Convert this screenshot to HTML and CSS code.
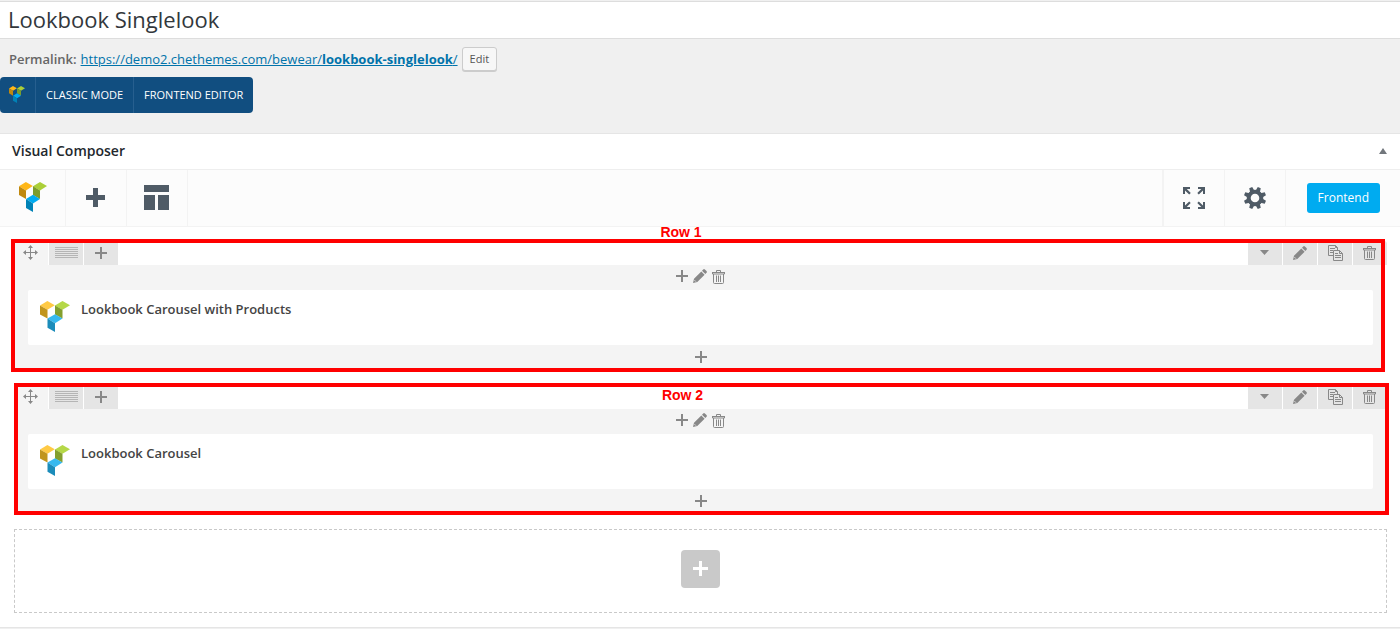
FILE: index.html
```
<!DOCTYPE html>
<html lang="en">
<head>
<meta charset="utf-8">
<title>Lookbook Singlelook</title>
<link rel="stylesheet" href="styles.css">
</head>
<body>
<svg class="sprite" aria-hidden="true">
  <symbol id="logo" viewBox="0 0 28 30" preserveAspectRatio="none">
    <path class="logo-y1" d="M0 4.3 6.9 0 13.8 4 7 8.5z"/>
    <path class="logo-y2" d="M0 4.3 7 8.5V17L0 13z"/>
    <path class="logo-g1" d="M14 4.3 21 0l7 4-7 4.500-7-4z"/>
    <path class="logo-g2" d="M14 4.3 21 8.5V17l-7-4z"/>
    <path class="logo-b1" d="M7 17l7-4.2L21 17l-7 4.5z"/>
    <path class="logo-b2" d="M7 17l7 4.5V30l-7-4z"/>
  </symbol>
  <symbol id="plus" viewBox="0 0 12 12"><path d="M5 0h2v5h5v2H7v5H5V7H0V5h5z"/></symbol>
  <symbol id="pencil" viewBox="0 0 14 14"><path d="M0 14l1-4.3L8.3 2.4l3.3 3.3L4.3 13zM9 1.7l1.2-1.2q.8-.8 1.7 0l1.6 1.6q.8.9 0 1.7L12.300 5z"/><path class="cut" d="M1.5 11.2l1.4 1.4"/></symbol>
  <symbol id="trash" viewBox="0 0 13 15"><path class="line" d="M0 3.5h13M4.5 3V1.500h4V3M.5 3.5V5h12V3.5M1.5 5v8.500q0 1 1 1h8q1 0 1-1V5M4.5 6.500V13M6.5 6.500V13M8.5 6.500V13"/></symbol>
  <symbol id="copy" viewBox="0 0 15 16"><path class="line" d="M5.5 10.500h-5v-10h7l2 2V5M2 3.500h5M2 5.500h3M2 7.500h3M7.5 .5v2h2M5.5 5.500h6l3 3v7h-9zM11.5 5.500v3h3M7 8.500h3M7 10.500h6M7 12.500h6"/></symbol>
  <symbol id="move" viewBox="0 0 15 15"><path d="M7 2h1v11H7zM2 7h11v1H2zM7.5 0L10 3H5zM7.5 15L5 12h5zM0 7.500L3 5v5zM15 7.500L12 10V5z"/></symbol>
  <symbol id="lines" viewBox="0 0 23 11"><path d="M0 0h23v1H0zM0 2h23v1H0zM0 4h23v1H0zM0 6h23v1H0zM0 8h23v1H0zM0 10h23v1H0z"/></symbol>
  <symbol id="caret" viewBox="0 0 9 5"><path d="M0 0h9L4.5 5z"/></symbol>
</svg>

<header class="title-bar">
  <input class="title-input" type="text" value="Lookbook Singlelook" aria-label="Title">
</header>

<div class="permalink">
  <strong>Permalink:</strong>
  <a href="#">https://demo2.chethemes.com/bewear/<b>lookbook-singlelook</b>/</a>
  <button class="edit" type="button">Edit</button>
</div>

<div class="modes">
  <span class="mode-logo"><svg width="16" height="17"><use href="#logo"/></svg></span>
  <button type="button">CLASSIC MODE</button>
  <button type="button">FRONTEND EDITOR</button>
</div>

<main class="composer">
  <div class="composer-head">
    <h2>Visual Composer</h2>
    <button class="toggle" type="button" aria-label="Toggle panel"><svg width="8" height="6" viewBox="0 0 8 6"><path d="M4 0l4 6H0z"/></svg></button>
  </div>

  <nav class="toolbar">
    <a class="tool tool-logo" href="#" aria-label="Visual Composer"><svg width="28" height="30"><use href="#logo"/></svg></a>
    <button class="tool odd-w odd-h" type="button" aria-label="Add element"><svg width="19" height="19" viewBox="0 0 19 19"><path d="M7 0h5v7h7v5h-7v7H7v-7H0V7h7z"/></svg></button>
    <button class="tool odd-w odd-h" type="button" aria-label="Templates"><svg width="25" height="25" viewBox="0 0 25 25"><path d="M0 0h25v7H0zM0 10h11v15H0zM14 10h11v15H14z"/></svg></button>
    <span class="spacer"></span>
    <button class="tool tool-right" type="button" aria-label="Full screen"><svg width="22" height="22" viewBox="0 0 22 22"><path d="M0 0h7v2H3.8l4 4L6.2 7.500 2 3.500V7H0zM22 0v7h-2V3.500l-4.200 4L14.300 6l4-4H15V0zM0 22v-7h2v3.500l4.200-4L7.700 16l-4 4H7v2zM22 22h-7v-2h3.300l-4-4 1.500-1.500 4.200 4V15h2z"/></svg></button>
    <button class="tool" type="button" aria-label="Settings"><svg width="22" height="22" viewBox="-11 -11 22 22"><g transform="rotate(22.5)"><path id="tooth" d="M-2.3-7l.7-4.200h3.200l.7 4.200zM-2.3 7l.7 4.200h3.200l.7-4.200z"/><use href="#tooth" transform="rotate(45)"/><use href="#tooth" transform="rotate(90)"/><use href="#tooth" transform="rotate(135)"/></g><circle class="ring" r="6.3"/></svg></button>
    <div class="frontend-wrap"><button class="frontend" type="button">Frontend</button></div>
  </nav>

  <div class="rows">
    <section class="row">
      <div class="controls">
        <button class="ctl drag odd-w odd-h" type="button" aria-label="Move row"><svg width="15" height="15"><use href="#move"/></svg></button>
        <button class="ctl layout odd-h" type="button" aria-label="Row layout"><svg width="23" height="11"><use href="#lines"/></svg></button>
        <button class="ctl" type="button" aria-label="Add column"><svg width="12" height="12"><use href="#plus"/></svg></button>
        <span class="spacer"></span>
        <button class="ctl odd-w odd-h" type="button" aria-label="Toggle row"><svg width="9" height="5"><use href="#caret"/></svg></button>
        <button class="ctl" type="button" aria-label="Edit row"><svg width="14" height="14"><use href="#pencil"/></svg></button>
        <button class="ctl" type="button" aria-label="Clone row"><svg width="15" height="16"><use href="#copy"/></svg></button>
        <button class="ctl odd-w odd-h" type="button" aria-label="Delete row"><svg width="13" height="15"><use href="#trash"/></svg></button>
      </div>
      <div class="column">
        <div class="column-tools">
          <button type="button" aria-label="Add"><svg width="12" height="12"><use href="#plus"/></svg></button>
          <button type="button" aria-label="Edit column"><svg width="14" height="14"><use href="#pencil"/></svg></button>
          <button type="button" aria-label="Delete column"><svg width="13" height="15"><use href="#trash"/></svg></button>
        </div>
        <article class="element"><svg class="soft" width="30" height="31"><use href="#logo"/></svg><h3>Lookbook Carousel with Products</h3></article>
        <div class="column-foot"><button type="button" aria-label="Append"><svg width="12" height="12"><use href="#plus"/></svg></button></div>
      </div>
      <div class="mark mark-one"><span>Row 1</span></div>
    </section>

    <section class="row">
      <div class="controls">
        <button class="ctl drag odd-w odd-h" type="button" aria-label="Move row"><svg width="15" height="15"><use href="#move"/></svg></button>
        <button class="ctl layout odd-h" type="button" aria-label="Row layout"><svg width="23" height="11"><use href="#lines"/></svg></button>
        <button class="ctl" type="button" aria-label="Add column"><svg width="12" height="12"><use href="#plus"/></svg></button>
        <span class="spacer"></span>
        <button class="ctl odd-w odd-h" type="button" aria-label="Toggle row"><svg width="9" height="5"><use href="#caret"/></svg></button>
        <button class="ctl" type="button" aria-label="Edit row"><svg width="14" height="14"><use href="#pencil"/></svg></button>
        <button class="ctl" type="button" aria-label="Clone row"><svg width="15" height="16"><use href="#copy"/></svg></button>
        <button class="ctl odd-w odd-h" type="button" aria-label="Delete row"><svg width="13" height="15"><use href="#trash"/></svg></button>
      </div>
      <div class="column">
        <div class="column-tools">
          <button type="button" aria-label="Add"><svg width="12" height="12"><use href="#plus"/></svg></button>
          <button type="button" aria-label="Edit column"><svg width="14" height="14"><use href="#pencil"/></svg></button>
          <button type="button" aria-label="Delete column"><svg width="13" height="15"><use href="#trash"/></svg></button>
        </div>
        <article class="element"><svg class="soft" width="30" height="31"><use href="#logo"/></svg><h3>Lookbook Carousel</h3></article>
        <div class="column-foot"><button type="button" aria-label="Append"><svg width="12" height="12"><use href="#plus"/></svg></button></div>
      </div>
      <div class="mark mark-two"><span>Row 2</span></div>
    </section>

    <div class="dropzone">
      <button type="button" aria-label="Add row"><svg width="15" height="15" viewBox="0 0 15 15"><path d="M6 0h3v6h6v3H9v6H6V9H0V6h6z"/></svg></button>
    </div>
  </div>
</main>
</body>
</html>
```
FILE: styles.css
```
* {
  box-sizing: border-box;
}

body {
  margin: 0;
  background: #f0f0f0;
  color: #444;
  font: 13px/18px "Open Sans", sans-serif;
}

button {
  display: inline-flex;
  align-items: center;
  justify-content: center;
  margin: 0;
  padding: 0;
  border: 0;
  background: none;
  color: inherit;
  font: inherit;
  cursor: pointer;
}

svg {
  display: block;
  flex: none;
  fill: currentColor;
}

.sprite {
  position: absolute;
  width: 0;
  height: 0;
}

.spacer {
  flex: 1;
}

.line {
  fill: none;
  stroke: currentColor;
}

.cut {
  stroke: #e5e5e5;
}

/* Keep icons with an odd width or height on whole pixels */
.odd-w {
  padding-right: 1px;
}

.odd-h {
  padding-bottom: 1px;
}

.logo-y1 { fill: var(--y1, #ffb718); }
.logo-y2 { fill: var(--y2, #c0890f); }
.logo-g1 { fill: var(--g1, #abcf38); }
.logo-g2 { fill: var(--g2, #7c9c2b); }
.logo-b1 { fill: var(--b1, #00abf0); }
.logo-b2 { fill: var(--b2, #0082b6); }

.soft {
  --y1: #ffca45;
  --y2: #c1951d;
  --g1: #b5d848;
  --g2: #839f2e;
  --b1: #37b9ef;
  --b2: #1b8cba;
}

.title-bar {
  padding-top: 1px;
}

.title-input {
  display: block;
  width: 100%;
  height: 38px;
  padding: 0 8px 3px;
  border: 1px solid #ddd;
  border-width: 1px 0;
  background: #fff;
  color: #32373c;
  font: 22px "Open Sans", sans-serif;
}

.permalink {
  display: flex;
  align-items: center;
  gap: 4px;
  padding: 8px 9px 6px;
  color: #666;
}

.permalink strong {
  font-weight: 600;
}

.permalink b {
  font-weight: 700;
}

.permalink a {
  color: #0073aa;
}

.edit {
  height: 24px;
  padding: 0 7px;
  border: 1px solid #ccc;
  border-radius: 3px;
  background: #f7f7f7;
  box-shadow: 0 1px 0 #ccc;
  color: #555;
  font-size: 11px;
}

.modes {
  display: inline-flex;
  height: 36px;
  overflow: hidden;
  border-radius: 4px;
  background: #114e80;
  color: #fff;
  vertical-align: top;
}

.modes button {
  padding: 0 10px;
  border-left: 1px solid #275f8f;
  font-size: 11px;
  font-weight: 500;
}

.mode-logo {
  display: flex;
  align-items: center;
  justify-content: center;
  width: 35px;
  padding-right: 1px;
  padding-bottom: 1px;
}

.composer {
  margin-top: 20px;
  border: 1px solid #e5e5e5;
  border-width: 1px 0;
  background: #fff;
}

.composer-head {
  display: flex;
  align-items: center;
  justify-content: space-between;
  height: 36px;
  padding: 0 13px 2px 12px;
  border-bottom: 1px solid #eee;
}

.composer-head h2 {
  margin: 0;
  color: #23282d;
  font-size: 14px;
  font-weight: 600;
}

.toggle {
  color: #72777c;
}

.toolbar {
  display: flex;
  height: 57px;
  border-bottom: 1px solid #f3f3f3;
  background: #fcfcfc;
  color: #4f5b66;
}

.tool {
  display: flex;
  align-items: center;
  justify-content: center;
  width: 61px;
  border-right: 1px solid #f3f3f3;
}

.tool-logo {
  width: 66px;
  padding-bottom: 2px;
}

.tool-right {
  width: 63px;
  border-left: 2px solid #f3f3f3;
}

.ring {
  fill: none;
  stroke: currentColor;
  stroke-width: 4;
}

.frontend-wrap {
  display: flex;
  align-items: center;
  padding: 0 20px 0 21px;
}

.frontend {
  height: 30px;
  padding: 0 11px 1px;
  border-radius: 3px;
  background: #00abf0;
  color: #fff;
  font-size: 12px;
}

.rows {
  padding: 14px 13px 14px 14px;
}

.row {
  position: relative;
  margin-bottom: 15px;
  color: #888;
}

.controls {
  display: flex;
  gap: 1px;
  height: 24px;
}

.ctl {
  width: 34px;
  background: #e5e5e5;
}

.ctl.drag {
  background: #f4f4f4;
}

.ctl.layout {
  color: #b5b5b5;
}

.ctl:last-child {
  border-top-right-radius: 3px;
}

.column {
  margin-right: 2px;
  padding: 0 12px 0 14px;
  background: #f4f4f4;
}

.column-tools {
  display: flex;
  align-items: center;
  justify-content: center;
  gap: 5px;
  height: 25px;
  padding-bottom: 3px;
}

.column-tools .cut {
  stroke: #f4f4f4;
}

.element {
  display: flex;
  gap: 11px;
  height: 55px;
  padding: 10px 12px;
  border-radius: 2px;
  background: #fff;
}

.element svg {
  margin-top: 1px;
}

.element h3 {
  margin: 0;
  color: #444;
  font-size: 13px;
  font-weight: 600;
}

.column-foot {
  display: flex;
  justify-content: center;
  height: 25px;
  padding-bottom: 1px;
}

/* Red outlines drawn over the rows */
.mark {
  position: absolute;
  border: 4px solid #f00;
  color: #f00;
  font: bold 14px/16px "Liberation Sans", Arial, sans-serif;
  text-align: center;
  pointer-events: none;
}

.mark span {
  position: absolute;
  left: 0;
  right: 0;
}

.mark-one {
  inset: -2px 2px -2px -3px;
}

.mark-one span {
  top: -19px;
  padding-right: 34px;
}

.mark-two {
  inset: -2px -2px -1px 0;
}

.mark-two span {
  top: 0;
  padding-right: 38px;
}

.dropzone {
  display: flex;
  align-items: center;
  justify-content: center;
  height: 84px;
  padding-bottom: 4px;
  border: 1px dashed #c9c9c9;
}

.dropzone button {
  width: 39px;
  height: 38px;
  padding-bottom: 1px;
  border-radius: 4px;
  background: #c9c9c9;
  color: #fff;
}
```
